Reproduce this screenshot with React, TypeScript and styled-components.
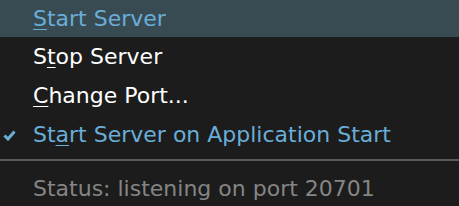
import React from 'react';
import styled, { createGlobalStyle } from 'styled-components';

const GlobalStyle = createGlobalStyle`
  html, body {
    margin: 0;
    padding: 0;
    background: #1c1c1c;
  }
`;

const Menu = styled.ul`
  list-style: none;
  margin: 0;
  padding: 0;
  width: 459px;
  height: 206px;
  overflow: hidden;
  background: #1c1c1c;
  font-family: 'DejaVu Sans', Verdana, sans-serif;
  font-size: 22px;
  display: flex;
  flex-direction: column;
`;

const Item = styled.li<{ $active?: boolean; $checked?: boolean }>`
  position: relative;
  display: flex;
  align-items: center;
  height: 39px;
  flex: none;
  padding-left: 33px;
  box-sizing: border-box;
  color: ${p => (p.$active || p.$checked ? '#6aaed8' : '#ffffff')};
  background: ${p => (p.$active ? '#384b53' : 'transparent')};
  &:first-child {
    height: 37px;
  }
`;

const Key = styled.span`
  text-decoration: underline;
  text-underline-offset: 3px;
  text-decoration-thickness: 1px;
`;

const Check = styled.svg`
  position: absolute;
  left: 3px;
  top: 50%;
  margin-top: -5px;
`;

const Separator = styled.li`
  height: 2px;
  flex: none;
  margin: 5px 0 0;
  background: #5b5b5b;
`;

const Status = styled.li`
  display: flex;
  align-items: center;
  height: 39px;
  flex: none;
  margin-top: 8px;
  padding-left: 33px;
  color: #858585;
`;

export default function App() {
  return (
    <>
      <GlobalStyle />
      <Menu>
        <Item $active>
          <span>
            <Key>S</Key>tart Server
          </span>
        </Item>
        <Item>
          <span>
            S<Key>t</Key>op Server
          </span>
        </Item>
        <Item>
          <span>
            <Key>C</Key>hange Port...
          </span>
        </Item>
        <Item $checked>
          <Check width="13" height="11" viewBox="0 0 13 11">
            <path d="M1.5 5.5 L5 9 L11.5 1.5" fill="none" stroke="#6aaed8" strokeWidth="3" />
          </Check>
          <span>
            St<Key>a</Key>rt Server on Application Start
          </span>
        </Item>
        <Separator />
        <Status>Status: listening on port 20701</Status>
      </Menu>
    </>
  );
}
